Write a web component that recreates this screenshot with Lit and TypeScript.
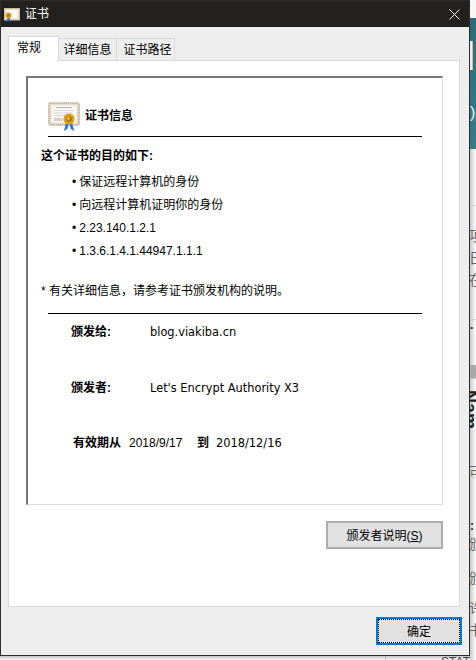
import { LitElement, html, css, svg } from "lit";
import { customElement } from "lit/decorators.js";

const bigIcon = html`<svg class="big" width="32" height="30" viewBox="0 0 32 30" aria-hidden="true">
  ${svg`<rect x="1" y="1" width="30" height="22" rx="1.5" fill="#e9e1d0" stroke="#b9ab92" stroke-width="1.6" stroke-dasharray="1.4 .5"/>
  <rect x="3" y="3" width="26" height="18" fill="#f8f6f0" stroke="#ddd5c4" stroke-width=".6"/>
  <rect x="8" y="5" width="16" height="1" fill="#aeb4c8"/><rect x="6" y="8" width="20" height="1" fill="#d8d8d8"/>
  <rect x="6" y="10.5" width="18" height="1" fill="#d8d8d8"/><rect x="6" y="13" width="11" height="1" fill="#d8d8d8"/>
  <rect x="6" y="16" width="8" height="3" fill="#cfcfcf"/>
  <path d="M18 21l-2 8 3.2-2 1.6-5zM24 21l2.2 8-3.4-2-1.4-5z" fill="#2a70dc"/>
  <circle cx="21" cy="17" r="5.6" fill="#dca215"/><circle cx="21" cy="17" r="3" fill="#b07a10"/><circle cx="20.4" cy="16.4" r="1.6" fill="#e6b53a"/>`}
</svg>`;

const titleIcon = html`<svg class="small" width="16" height="14" viewBox="0 0 16 14" aria-hidden="true">
  ${svg`<rect x=".5" y=".5" width="15" height="11.5" fill="#efe6d6" stroke="#c9b99c"/>
  <rect x="3" y="2.5" width="10" height="7" fill="#fbfaf6"/>
  <path d="M3.5 9l-1 5 2-1 2 1-1-5z" fill="#2a70dc"/>
  <circle cx="4.5" cy="7.5" r="3" fill="#d9a015"/><circle cx="4.5" cy="7.5" r="1.2" fill="#a8740e"/>`}
</svg>`;

const sideRows = [
  { h: 57, cls: "line-bottom", t: "" },
  { h: 20, cls: "", t: "" },
  { h: 22, cls: "cjk", t: "项" },
  { h: 22, cls: "cjk", t: "日" },
  { h: 22, cls: "cjk", t: "在" },
  { h: 28, cls: "line-bottom", t: "" },
  { h: 30, cls: "dot", t: "·" },
  { h: 15, cls: "", t: "" },
  { h: 13, cls: "band", t: "" },
  { h: 12, cls: "line-top", t: "" },
  { h: 42, cls: "vert", t: "Nam" },
  { h: 30, cls: "", t: "" },
  { h: 16, cls: "cjk line-bottom", t: "可" },
  { h: 40, cls: "", t: "" },
  { h: 16, cls: "dot", t: ":" },
  { h: 34, cls: "cjk", t: "颁" },
  { h: 30, cls: "cjk", t: "颁" },
  { h: 22, cls: "cjk", t: "许" },
  { h: 20, cls: "cjk", t: "书" },
];

@customElement("app-root")
export class AppRoot extends LitElement {
  static styles = css`
    :host { display: flex; width: 476px; height: 660px; overflow: hidden; background: #fff;
      font-family: "Liberation Sans", "Noto Sans CJK SC", sans-serif; font-size: 12px; color: #000; }
    .left { width: 470px; flex: none; display: flex; flex-direction: column; }
    .dialog { height: 656px; flex: none; box-sizing: border-box; border: 1px solid #2e2e2e; background: #eeeeee; display: flex; flex-direction: column; }
    .title { height: 26px; flex: none; background: #22211f; color: #fff; display: flex; align-items: center; padding: 0 9px 0 3px; gap: 5px; }
    .title .name { flex: 1; padding-bottom: 3px; }
    .small { margin-top: 2px; display: block; }
    .close { display: block; }
    .tabs { display: flex; align-items: flex-end; height: 33px; padding-left: 7px; flex: none; }
    .tab { box-sizing: border-box; height: 22px; width: 58px; border: 1px solid #d9d9d9; border-bottom: none; border-left: none; display: flex; align-items: center; justify-content: center; background: #eeeeee; padding-bottom: 2px; }
    .tab:last-child { padding-left: 4px; }
    .tab.on { width: 51px; height: 25px; background: #fff; border-left: 1px solid #d9d9d9; padding-bottom: 5px; margin-bottom: -1px; position: relative; z-index: 1; padding-right: 9px; }
    .panel { margin: 0 9px 0 7px; height: 547px; box-sizing: border-box; border: 1px solid #d9d9d9; background: #fff; padding: 15px 16px 0 17px; display: flex; flex-direction: column; align-items: stretch; }
    .box { height: 429px; box-sizing: border-box; border: 1px solid #dddddd; border-top: 2px solid #777; border-left: 2px solid #777; padding: 25px 20px 0 20px; flex: none; }
    .head { display: flex; align-items: flex-start; gap: 5px; height: 34px; box-sizing: border-box; border-bottom: 1px solid #000; font-weight: bold; }
    .head span { line-height: 26px; }
    .big { display: block; margin-top: -1px; }
    .purpose { font-weight: bold; margin: 11px 0 0 -7px; height: 16px; line-height: 16px; }
    .list { margin: 10px 0 0 24px; padding: 0; list-style: none; display: flex; flex-direction: column; gap: 7px; }
    .list li { height: 16px; line-height: 16px; display: flex; gap: 3px; }
    .note { margin: 24px 0 0 -7px; height: 16px; line-height: 16px; }
    .rule { border-top: 1px solid #000; margin-top: 14px; }
    .kv { display: grid; grid-template-columns: 79px auto; margin: 10px 0 0 23px; height: 16px; line-height: 16px; }
    .k { font-weight: bold; }
    .v { font-family: "DejaVu Sans", sans-serif; font-size: 11.4px; }
    .kv.second { margin-top: 40px; }
    .dates { display: flex; margin: 39px 0 0 25px; height: 16px; line-height: 16px; }
    .dates b:first-child { width: 56px; }
    .dates .d1 { width: 68px; }
    .dates .to { width: 19px; }
    .issuer { align-self: flex-end; margin: 16px 0 0; }
    button { box-sizing: border-box; font: inherit; color: #000; background: #e1e1e1; border: 2px solid #adadad; display: block; padding: 0 0 2px; }
    .issuer button { width: 117px; height: 28px; }
    .foot { flex: 1; display: flex; justify-content: flex-end; padding: 10px 7px 0 0; }
    .ok { width: 86px; height: 28px; border: 2px solid #0078d7; outline: 1px dotted #000; outline-offset: -3px; }
    .under { flex: 1; overflow: hidden; display: flex; background: linear-gradient(#c4c4c4, #f6f6f6); color: #444; line-height: 12px; }
    .tick { margin-left: 385px; width: 1px; background: #bbb; }
    .stat { margin-left: auto; white-space: nowrap; }
    .side { flex: 1; min-width: 0; height: 660px; display: flex; flex-direction: column; overflow: hidden; color: #555; background: linear-gradient(90deg, #c8c8c8, #efefef 70%, #fff); }
    .gap { height: 18px; flex: none; background: #f7f7f7; }
    .teal { height: 131px; flex: none; box-sizing: border-box; overflow: hidden; background: linear-gradient(100deg, #2a6a72, #33808a); color: #e6f0f0; padding-top: 20px; white-space: nowrap; }
    .h { font-size: 42px; line-height: 36px; height: 36px; margin-left: -25px; font-weight: bold; }
    .o { font-size: 16px; line-height: 18px; margin-top: 30px; }
    .r { flex: none; box-sizing: border-box; overflow: hidden; white-space: nowrap; margin: 0; }
    .cjk { font-size: 14px; line-height: 20px; margin-left: -1px; color: #666; }
    .line-bottom { border-bottom: 1px solid #d0d0d0; }
    .line-top { border-top: 1px solid #c8c8c8; }
    .band { background: #a9a9a9; }
    .dot { color: #222; font-weight: bold; line-height: 16px; }
    .vert { writing-mode: vertical-rl; font-weight: bold; font-size: 18px; color: #222; line-height: 12px; }
  `;
  render() {
    return html`
      <div class="left">
        <section class="dialog">
          <header class="title">${titleIcon}<span class="name">证书</span>
            <svg class="close" width="11" height="11" viewBox="0 0 11 11" aria-label="关闭"><path d="M.5.5l10 10M10.5.5l-10 10" stroke="#fff" fill="none"/></svg>
          </header>
          <nav class="tabs"><div class="tab on">常规</div><div class="tab">详细信息</div><div class="tab">证书路径</div></nav>
          <div class="panel">
            <div class="box">
              <div class="head">${bigIcon}<span>证书信息</span></div>
              <div class="purpose">这个证书的目的如下:</div>
              <ul class="list">
                <li><span>•</span><span>保证远程计算机的身份</span></li>
                <li><span>•</span><span>向远程计算机证明你的身份</span></li>
                <li><span>•</span><span>2.23.140.1.2.1</span></li>
                <li><span>•</span><span>1.3.6.1.4.1.44947.1.1.1</span></li>
              </ul>
              <div class="note">* 有关详细信息，请参考证书颁发机构的说明。</div>
              <div class="rule"></div>
              <div class="kv"><span class="k">颁发给:</span><span class="v">blog.viakiba.cn</span></div>
              <div class="kv second"><span class="k">颁发者:</span><span class="v">Let's Encrypt Authority X3</span></div>
              <div class="dates"><b>有效期从</b><span class="d1">2018/9/17</span><b class="to">到</b><span class="v">2018/12/16</span></div>
            </div>
            <div class="issuer"><button>颁发者说明(<u>S</u>)</button></div>
          </div>
          <footer class="foot"><button class="ok">确定</button></footer>
        </section>
        <div class="under"><span class="tick"></span><span class="stat">STAT</span></div>
      </div>
      <aside class="side">
        <div class="gap"></div>
        <div class="teal"><div class="h">H</div><div class="o">)a</div></div>
        ${sideRows.map((r) => html`<div class="r ${r.cls}" style="height:${r.h}px">${r.t}</div>`)}
      </aside>
    `;
  }
}
